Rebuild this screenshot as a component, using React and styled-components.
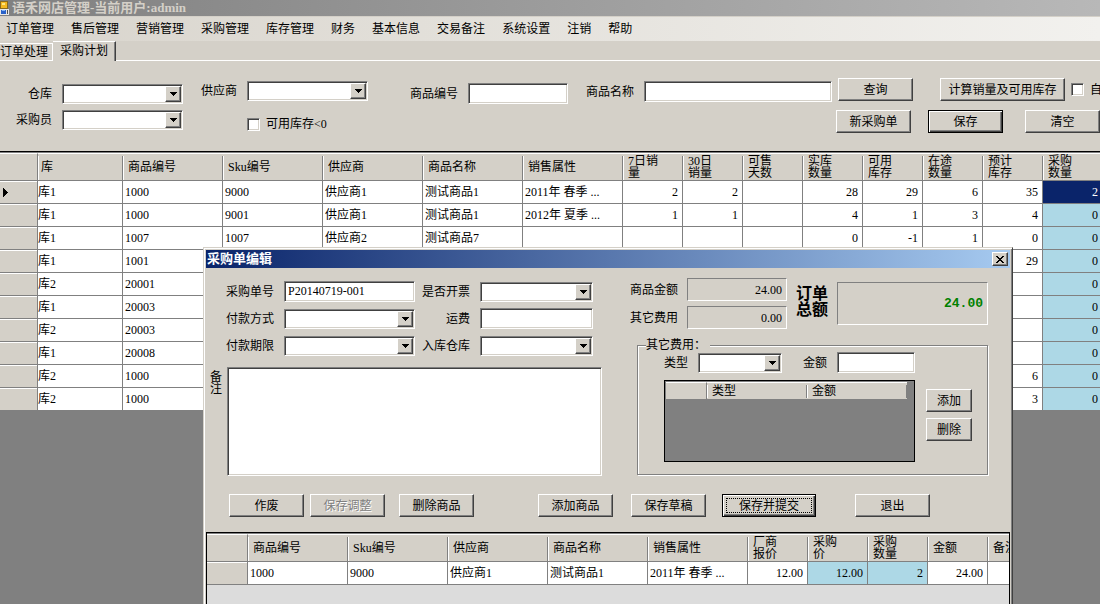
import styled, { createGlobalStyle, css } from 'styled-components'

const GlobalStyle = createGlobalStyle`
  :root {
    --face: #d4d0c8;
    --shadow: #808080;
    --dark: #404040;
    --editable: #add8e6;
    --highlight: #0a246a;
  }
  * {
    box-sizing: border-box;
  }
  body {
    background: var(--shadow);
    margin: 0;
    overflow: hidden;
  }
  body, button, input, select, textarea {
    color: black;
    font-family: 'Liberation Serif', 'Noto Sans CJK SC', serif;
    font-size: 12px;
    line-height: 14px;
  }
`

const sunken = css`
  background: white;
  border: 1px solid;
  border-color: var(--shadow) white white var(--shadow);
  border-radius: 0;
  box-shadow: inset 1px 1px var(--dark), inset -1px -1px var(--face);
  outline: none;
`
const raised = css`
  background: var(--face);
  border: 1px solid;
  border-color: white var(--dark) var(--dark) white;
  box-shadow: inset -1px -1px var(--shadow);
`

/* main window */
const Window = styled.div`
  display: flex;
  flex-direction: column;
  height: 100vh;
  overflow: hidden;
  position: relative;
`
const TitleBar = styled.header`
  align-items: center;
  background: linear-gradient(to right, #808080, #b8b8b8);
  color: var(--face);
  display: flex;
  flex: none;
  font-size: 13px;
  font-weight: bold;
  gap: 3px;
  height: 16px;
  line-height: 14px;
`
const MenuBar = styled.nav`
  background: linear-gradient(to right, #d8d4cc, #f2f1ee);
  border-top: 1px solid var(--face);
  display: flex;
  flex: none;
  gap: 17px;
  height: 25px;
  padding-left: 6px;
`
const MenuItem = styled.button`
  background: none;
  border: 0;
  padding: 0;
  white-space: nowrap;
`
const TabStrip = styled.div`
  align-items: flex-end;
  background: var(--face);
  display: flex;
  flex: none;
  height: 20px;
  &::after {
    border-bottom: 1px solid white;
    content: '';
    flex: 1;
  }
`
const Tab = styled.button`
  background: var(--face);
  border: 0;
  border-bottom: 1px solid white;
  border-right: 1px solid white;
  border-top: 1px solid white;
  height: 18px;
  padding: 0 4px 0 0;
  ${({ $active }) => $active && css`
    border-bottom: 0;
    border-right: 1px solid var(--dark);
    box-shadow: inset -1px 0 var(--shadow);
    height: 20px;
    padding: 0 7px 2px;
  `}
`

/* controls */
const TextBox = styled.input`
  ${sunken}
  height: 21px;
  min-width: 0;
  padding: 0 3px;
  width: ${({ $width }) => $width || '100%'};
`
const Memo = styled.textarea`
  ${sunken}
  flex: 1;
  height: 109px;
  padding: 3px;
  resize: none;
`
const Combo = styled.span`
  ${sunken}
  display: grid;
  height: 20px;
  padding: 1px;
  width: ${({ $width }) => $width || '100%'};
  > * {
    grid-area: 1 / 1;
  }
`
const ComboSelect = styled.select`
  appearance: none;
  background: none;
  border: 0;
  height: 16px;
  min-width: 0;
  outline: none;
  padding: 0 18px 0 2px;
  width: 100%;
`
const ComboArrow = styled.span`
  ${raised}
  align-items: center;
  display: flex;
  height: 16px;
  justify-content: center;
  justify-self: end;
  pointer-events: none;
  width: 16px;
`
const Button = styled.button`
  ${raised}
  flex: none;
  height: 23px;
  padding: 0;
  white-space: nowrap;
  width: ${({ $width }) => $width || '75px'};
  &:disabled {
    color: var(--shadow);
    text-shadow: 1px 1px white;
  }
  ${({ $default }) => $default && css`
    border-color: black;
    box-shadow: inset 1px 1px white, inset -1px -1px var(--dark), inset -2px -2px var(--shadow);
  `}
  ${({ $focused }) => $focused && css`
    outline: 1px dotted black;
    outline-offset: -5px;
  `}
`
const Check = styled.input`
  ${sunken}
  appearance: none;
  flex: none;
  height: 13px;
  margin: 0;
  width: 13px;
`
const CheckLabel = styled.label`
  align-items: center;
  display: flex;
  flex: none;
  gap: 6px;
  white-space: nowrap;
`
const Label = styled.label`
  text-align: right;
  white-space: nowrap;
`

/* search area */
const Filters = styled.form`
  background: var(--face);
  display: flex;
  flex: none;
  height: 90px;
  overflow: hidden;
  padding-left: 16px;
`
const FilterGroup = styled.div`
  align-content: start;
  align-items: center;
  display: grid;
  flex: ${({ $grow }) => ($grow ? '1' : 'none')};
  gap: ${({ $rowGap }) => $rowGap || '6px'} 10px;
  grid-template-columns: auto 1fr;
  margin-right: ${({ $after }) => $after};
  padding-top: ${({ $top }) => $top};
`
const SecondColumn = styled.div`
  grid-column: 2;
`
const Actions = styled.div`
  display: flex;
  flex: none;
  flex-direction: column;
  gap: 9px;
  padding-top: 17px;
  width: 264px;
`
const ActionRow = styled.div`
  align-items: center;
  display: flex;
  padding-left: ${({ $indent }) => $indent || 0};
`

/* data grids */
const GridBox = styled.div`
  background: var(--shadow);
  border-top: 1px solid black;
  box-shadow: inset 0 1px var(--shadow);
  flex: 1;
  min-height: 0;
  overflow: hidden;
  padding-top: 1px;
`
const Table = styled.table`
  border-collapse: separate;
  border-spacing: 0;
  table-layout: fixed;
  width: ${({ $width }) => $width}px;
`
const Head = styled.th`
  background: linear-gradient(var(--shadow), var(--shadow)) right 0 top 2px / 1px 24px no-repeat,
    linear-gradient(white, white) left 0 top 2px / 1px 24px no-repeat, var(--face);
  border-bottom: 1px solid var(--shadow);
  border-top: 1px solid white;
  font-weight: normal;
  height: 28px;
  line-height: 12px;
  overflow: hidden;
  padding: ${({ $flush }) => ($flush ? '0 0 0 3px' : '0 0 0 5px')};
  text-align: left;
  white-space: pre;
`
const Corner = styled.td`
  background: var(--face);
  border-bottom: 1px solid var(--shadow);
  border-right: 1px solid var(--shadow);
  border-top: 1px solid white;
  padding: 0;
`
const RowHead = styled.td`
  background: var(--face);
  border-bottom: 1px solid var(--shadow);
  border-right: 1px solid var(--shadow);
  box-shadow: inset 0 1px white;
  height: 23px;
  padding: 0 0 0 3px;
  svg {
    display: block;
  }
`
const Cell = styled.td`
  background: ${({ $edit, $selected }) => ($selected ? 'var(--highlight)' : $edit ? 'var(--editable)' : 'white')};
  border-bottom: 1px solid var(--shadow);
  border-right: 1px solid var(--shadow);
  color: ${({ $selected }) => ($selected ? 'white' : 'black')};
  height: 23px;
  overflow: hidden;
  padding: ${({ $num, $flush }) => ($flush ? '0' : $num ? '0 4px 0 0' : '0 0 0 2px')};
  text-align: ${({ $num }) => ($num ? 'right' : 'left')};
  white-space: pre;
`

/* order dialog */
const Dialog = styled.section`
  background: var(--face);
  border: 1px solid;
  border-color: var(--face) var(--dark) var(--dark) var(--face);
  box-shadow: inset 1px 1px white, inset -1px -1px var(--shadow);
  display: flex;
  flex-direction: column;
  left: 203px;
  min-height: 400px;
  padding: 2px;
  position: absolute;
  top: 247px;
  width: 810px;
`
const DialogTitle = styled.header`
  align-items: center;
  background: linear-gradient(to right, #0a246a, #a6caf0);
  color: white;
  display: flex;
  font-size: 13px;
  font-weight: bold;
  height: 18px;
  justify-content: space-between;
  padding: 0 2px 0 1px;
`
const CloseButton = styled.button`
  ${raised}
  align-items: center;
  display: flex;
  height: 14px;
  justify-content: center;
  padding: 0;
  width: 16px;
`
const DialogBody = styled.div`
  display: flex;
  height: 226px;
  justify-content: space-between;
  padding: 10px 22px 0 4px;
`
const LeftPane = styled.div`
  width: 392px;
`
const OrderFields = styled.div`
  align-items: center;
  display: grid;
  gap: 0 10px;
  grid-template-columns: 48px 131px 45px 113px;
  grid-template-rows: repeat(3, 27px);
  justify-content: end;
  padding-right: 9px;
  ${Label} {
    justify-self: end;
  }
`
const MemoRow = styled.div`
  display: flex;
  gap: 5px;
  margin-top: 8px;
`
const MemoLabel = styled.label`
  line-height: 12px;
  padding-top: 4px;
  width: 12px;
`
const RightPane = styled.div`
  width: 358px;
`
const Totals = styled.div`
  display: flex;
  gap: 9px;
`
const SmallTotals = styled.div`
  align-items: center;
  display: grid;
  gap: 5px 9px;
  grid-template-columns: 48px 100px;
`
const Output = styled.output`
  align-items: center;
  border: 1px solid;
  border-color: var(--shadow) white white var(--shadow);
  display: flex;
  height: 23px;
  justify-content: flex-end;
  padding-right: 4px;
`
const TotalLabel = styled.label`
  font-size: 16px;
  font-weight: bold;
  line-height: 16px;
  padding-top: 8px;
  width: 32px;
`
const BigOutput = styled(Output)`
  color: green;
  flex: 1;
  font-family: 'Liberation Mono', monospace;
  font-size: 13px;
  font-weight: bold;
  height: 43px;
  margin-top: 4px;
`
const FeeBox = styled.fieldset`
  border: 1px solid var(--shadow);
  box-shadow: 1px 1px white, inset 1px 1px white;
  height: 137px;
  margin: 9px 0 0 7px;
  padding: 0 14px 0 26px;
`
const Legend = styled.legend`
  background: var(--face);
  margin-left: -18px;
  padding: 0 3px 0 0;
  width: 64px;
`
const FeeInputs = styled.div`
  align-items: center;
  display: flex;
  gap: 10px;
  ${Combo} {
    margin-right: 11px;
  }
`
const FeeArea = styled.div`
  display: flex;
  gap: 11px;
  margin-top: 7px;
`
const FeeGrid = styled.div`
  background: var(--shadow);
  border: 1px solid black;
  height: 82px;
  padding: 1px;
  width: 251px;
  ${Head} {
    background-size: 1px 13px, 1px 13px, auto;
    border-bottom: 0;
    height: 17px;
  }
  ${Corner} {
    border-bottom: 0;
  }
`
const FeeButtons = styled.div`
  display: flex;
  flex-direction: column;
  gap: 6px;
  padding-top: 9px;
`
const DialogButtons = styled.div`
  display: flex;
  padding-left: 23px;
`
const Spacer = styled.span`
  flex: none;
  width: ${({ $width }) => $width};
`
const LinesBox = styled.div`
  background: #dcdcdc;
  border: 1px solid black;
  box-shadow: inset 0 1px var(--shadow);
  flex: 1;
  margin-top: 15px;
  overflow: hidden;
  padding-top: 1px;
`

const menus = ['订单管理', '售后管理', '营销管理', '采购管理', '库存管理', '财务', '基本信息', '交易备注', '系统设置', '注销', '帮助']

const stockColumns = [
  ['库', 85], ['商品编号', 100], ['Sku编号', 100], ['供应商', 100], ['商品名称', 100], ['销售属性', 100],
  ['7日销\n量', 60], ['30日\n销量', 60], ['可售\n天数', 60], ['实库\n数量', 60],
  ['可用\n库存', 60], ['在途\n数量', 60], ['预计\n库存', 60], ['采购\n数量', 60]
]
const stockRows = [
  ['库1', '1000', '9000', '供应商1', '测试商品1', '2011年 春季 ...', '2', '2', '', '28', '29', '6', '35', '2'],
  ['库1', '1000', '9001', '供应商1', '测试商品1', '2012年 夏季 ...', '1', '1', '', '4', '1', '3', '4', '0'],
  ['库1', '1007', '1007', '供应商2', '测试商品7', '', '', '', '', '0', '-1', '1', '0', '0'],
  ['库1', '1001', '', '', '', '', '', '', '', '', '', '', '29', '0'],
  ['库2', '20001', '', '', '', '', '', '', '', '', '', '', '', '0'],
  ['库1', '20003', '', '', '', '', '', '', '', '', '', '', '', '0'],
  ['库2', '20003', '', '', '', '', '', '', '', '', '', '', '', '0'],
  ['库1', '20008', '', '', '', '', '', '', '', '', '', '', '', '0'],
  ['库2', '1000', '', '', '', '', '', '', '', '', '', '', '6', '0'],
  ['库2', '1000', '', '', '', '', '', '', '', '', '', '', '3', '0']
]

const lineColumns = [
  ['商品编号', 100], ['Sku编号', 100], ['供应商', 100], ['商品名称', 100], ['销售属性', 100],
  ['厂商\n报价', 60], ['采购\n价', 60], ['采购\n数量', 60], ['金额', 60], ['备注', 60]
]
const lineRow = ['1000', '9000', '供应商1', '测试商品1', '2011年 春季 ...', '12.00', '12.00', '2', '24.00', '']

function Dropdown({ id, width }) {
  return (
    <Combo $width={width}>
      <ComboSelect id={id} />
      <ComboArrow>
        <svg width='7' height='4' viewBox='0 0 7 4' shapeRendering='crispEdges'>
          <path d='M0 0h7v1h-1v1h-1v1h-1v1h-1v-1h-1v-1h-1v-1h-1z' />
        </svg>
      </ComboArrow>
    </Combo>
  )
}

function AppIcon() {
  return (
    <svg width='9' height='14' viewBox='0 0 9 14' shapeRendering='crispEdges'>
      <path fill='#8a6a20' d='M0 0h8v8h-8z' />
      <path fill='#f5b820' d='M1 1h6v6h-6z' />
      <path fill='#ffe680' d='M2 2h3v2h-3z' />
      <path fill='#e8e8e8' d='M0 8h9v6h-9z' />
      <path fill='#2a62c8' d='M1 9h5v4h-5z' />
      <path fill='#7fb2f5' d='M2 9h3v1h-3z' />
      <path fill='#505050' d='M7 9h1v4h-1z' />
    </svg>
  )
}

function Heads({ columns, flushFirst }) {
  return columns.map(([title], i) => (
    <Head key={i} scope='col' $flush={flushFirst && i === 0}>{title}</Head>
  ))
}

function Cols({ head, columns }) {
  return (
    <colgroup>
      <col width={head} />
      {columns.map(([, width], i) => <col key={i} width={width} />)}
    </colgroup>
  )
}

function StockGrid() {
  return (
    <GridBox>
      <Table $width={1103}>
        <Cols head={38} columns={stockColumns} />
        <thead>
          <tr>
            <Corner />
            <Heads columns={stockColumns} flushFirst />
          </tr>
        </thead>
        <tbody>
          {stockRows.map((row, r) => (
            <tr key={r}>
              <RowHead>
                {r === 0 && (
                  <svg width='5' height='9' viewBox='0 0 5 9' shapeRendering='crispEdges'>
                    <path d='M0 0h1v1h1v1h1v1h1v1h1v1h-1v1h-1v1h-1v1h-1v1h-1z' />
                  </svg>
                )}
              </RowHead>
              {row.map((value, c) => (
                <Cell key={c} $flush={c === 0} $num={c > 5} $edit={c === 13} $selected={c === 13 && r === 0}>
                  {value}
                </Cell>
              ))}
            </tr>
          ))}
        </tbody>
      </Table>
    </GridBox>
  )
}

function OrderDialog() {
  return (
    <Dialog role='dialog' aria-labelledby='dialog-title'>
      <DialogTitle>
        <span id='dialog-title'>采购单编辑</span>
        <CloseButton aria-label='关闭'>
          <svg width='8' height='7' viewBox='0 0 8 7' shapeRendering='crispEdges'>
            <path d='M0 0h2v1h1v1h2v-1h1v-1h2v1h-1v1h-1v1h-1v1h1v1h1v1h1v1h-2v-1h-1v-1h-2v1h-1v1h-2v-1h1v-1h1v-1h1v-1h-1v-1h-1v-1h-1z' />
          </svg>
        </CloseButton>
      </DialogTitle>
      <DialogBody>
        <LeftPane>
          <OrderFields>
            <Label htmlFor='order-no'>采购单号</Label>
            <TextBox id='order-no' defaultValue='P20140719-001' />
            <Label htmlFor='invoice'>是否开票</Label>
            <Dropdown id='invoice' />
            <Label htmlFor='pay-method'>付款方式</Label>
            <Dropdown id='pay-method' />
            <Label htmlFor='freight'>运费</Label>
            <TextBox id='freight' />
            <Label htmlFor='pay-term'>付款期限</Label>
            <Dropdown id='pay-term' />
            <Label htmlFor='in-store'>入库仓库</Label>
            <Dropdown id='in-store' />
          </OrderFields>
          <MemoRow>
            <MemoLabel htmlFor='memo'>备注</MemoLabel>
            <Memo id='memo' />
          </MemoRow>
        </LeftPane>
        <RightPane>
          <Totals>
            <SmallTotals>
              <Label htmlFor='goods-sum'>商品金额</Label>
              <Output id='goods-sum'>24.00</Output>
              <Label htmlFor='fee-sum'>其它费用</Label>
              <Output id='fee-sum'>0.00</Output>
            </SmallTotals>
            <TotalLabel htmlFor='order-sum'>订单总额</TotalLabel>
            <BigOutput id='order-sum'>24.00</BigOutput>
          </Totals>
          <FeeBox>
            <Legend>其它费用：</Legend>
            <FeeInputs>
              <Label htmlFor='fee-type'>类型</Label>
              <Dropdown id='fee-type' width='84px' />
              <Label htmlFor='fee-amount'>金额</Label>
              <TextBox id='fee-amount' $width='78px' />
            </FeeInputs>
            <FeeArea>
              <FeeGrid>
                <Table $width={241}>
                  <Cols head={41} columns={[['', 100], ['', 100]]} />
                  <thead>
                    <tr>
                      <Corner />
                      <Head scope='col'>类型</Head>
                      <Head scope='col'>金额</Head>
                    </tr>
                  </thead>
                </Table>
              </FeeGrid>
              <FeeButtons>
                <Button $width='46px'>添加</Button>
                <Button $width='46px'>删除</Button>
              </FeeButtons>
            </FeeArea>
          </FeeBox>
        </RightPane>
      </DialogBody>
      <DialogButtons>
        <Button>作废</Button>
        <Spacer $width='6px' />
        <Button disabled>保存调整</Button>
        <Spacer $width='14px' />
        <Button>删除商品</Button>
        <Spacer $width='64px' />
        <Button>添加商品</Button>
        <Spacer $width='18px' />
        <Button>保存草稿</Button>
        <Spacer $width='16px' />
        <Button $width='94px' $default $focused>保存并提交</Button>
        <Spacer $width='39px' />
        <Button>退出</Button>
      </DialogButtons>
      <LinesBox>
        <Table $width={841}>
          <Cols head={41} columns={lineColumns} />
          <thead>
            <tr>
              <Corner />
              <Heads columns={lineColumns} />
            </tr>
          </thead>
          <tbody>
            <tr>
              <RowHead />
              {lineRow.map((value, c) => (
                <Cell key={c} $num={c > 4} $edit={c === 6 || c === 7}>{value}</Cell>
              ))}
            </tr>
          </tbody>
        </Table>
      </LinesBox>
    </Dialog>
  )
}

export default function App() {
  return (
    <Window>
      <GlobalStyle />
      <TitleBar>
        <AppIcon />
        语禾网店管理-当前用户:admin
      </TitleBar>
      <MenuBar>
        {menus.map((menu) => <MenuItem key={menu}>{menu}</MenuItem>)}
      </MenuBar>
      <TabStrip>
        <Tab>订单处理</Tab>
        <Tab $active>采购计划</Tab>
      </TabStrip>
      <Filters onSubmit={(e) => e.preventDefault()}>
        <FilterGroup $top='23px' $after='18px'>
          <Label htmlFor='store'>仓库</Label>
          <Dropdown id='store' width='121px' />
          <Label htmlFor='buyer'>采购员</Label>
          <Dropdown id='buyer' width='121px' />
        </FilterGroup>
        <FilterGroup $top='20px' $after='42px' $rowGap='16px'>
          <Label htmlFor='supplier'>供应商</Label>
          <Dropdown id='supplier' width='121px' />
          <SecondColumn>
            <CheckLabel>
              <Check type='checkbox' />
              可用库存&lt;0
            </CheckLabel>
          </SecondColumn>
        </FilterGroup>
        <FilterGroup $top='22px' $after='18px'>
          <Label htmlFor='goods-no'>商品编号</Label>
          <TextBox id='goods-no' $width='100px' />
        </FilterGroup>
        <FilterGroup $top='20px' $after='4px' $grow>
          <Label htmlFor='goods-name'>商品名称</Label>
          <TextBox id='goods-name' />
        </FilterGroup>
        <Actions>
          <ActionRow $indent='2px'>
            <Button>查询</Button>
            <Spacer $width='27px' />
            <Button $width='125px'>计算销量及可用库存</Button>
            <Spacer $width='6px' />
            <CheckLabel>
              <Check type='checkbox' />
              自
            </CheckLabel>
          </ActionRow>
          <ActionRow>
            <Button>新采购单</Button>
            <Spacer $width='17px' />
            <Button $default>保存</Button>
            <Spacer $width='22px' />
            <Button>清空</Button>
          </ActionRow>
        </Actions>
      </Filters>
      <StockGrid />
      <OrderDialog />
    </Window>
  )
}
